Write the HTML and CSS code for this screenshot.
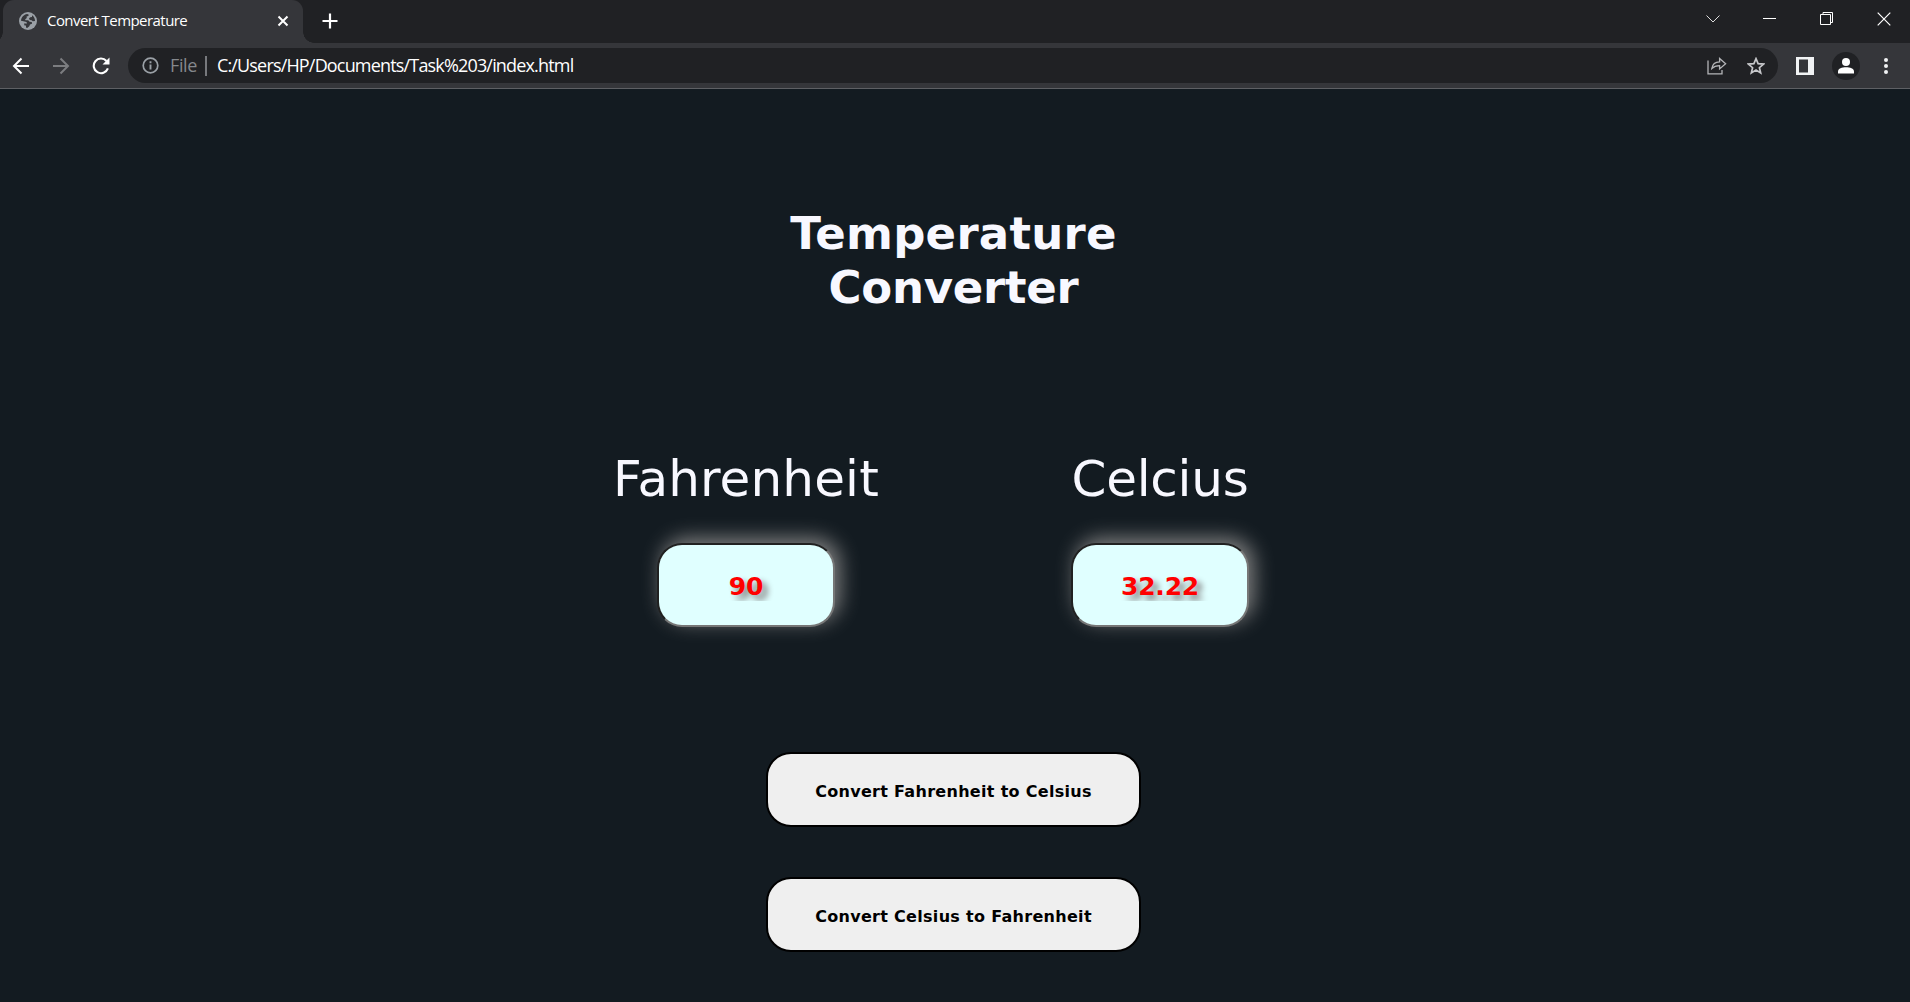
FILE: index.html
```html
<!DOCTYPE html>
<html lang="en">
<head>
<meta charset="utf-8">
<title>Convert Temperature</title>
<link rel="stylesheet" href="styles.css">
</head>
<body>
<header class="browser">
  <div class="tabstrip">
    <div class="tab">
      <svg class="globe" width="18" height="18" viewBox="0 0 18 18"><circle cx="9" cy="9" r="9" fill="#9aa0a6"/><path d="M2 8.700C2.200 5.400 4.800 2.500 8.200 2.100L9.800 2.700 9.300 4 7.600 4.600 7.800 6 6.200 7.200 6.400 8.200H9.200L10.600 9.700 12.800 10 13 11.800 11 12.500 10.300 14.300 8.200 16 7 15.500V13.400H5.500L5 11.500H8L7.500 10 5.500 9.400z M13 3.300C15 4.600 16.100 6.700 16 9L13.800 9.300 12.600 8.200 10.700 7.900 10 6.300 11.300 5.200 13 5z" fill="#35363a"/></svg>
      <span class="tab-title">Convert Temperature</span>
      <svg class="tab-close" width="12" height="12" viewBox="0 0 12 12"><path d="M1.500 1.500l9 9m0-9l-9 9" stroke="#fff" stroke-width="2"/></svg>
    </div>
    <svg class="new-tab" width="16" height="16" viewBox="0 0 16 16"><path d="M8 .5v15M.5 8h15" stroke="#fff" stroke-width="2.200"/></svg>
    <div class="window-controls">
      <svg width="14" height="14" viewBox="0 0 14 14"><path d="M.5 3.500l6.500 6.500 6.500-6.500" fill="none" stroke="#ddd"/></svg>
      <svg width="14" height="14" viewBox="0 0 14 14"><path d="M0 6.500h13" stroke="#fff"/></svg>
      <svg width="14" height="14" viewBox="0 0 14 14"><path d="M.5 2.500h10v10H.5zM3 2V.5h9.500v10H11" fill="none" stroke="#fff"/></svg>
      <svg width="14" height="14" viewBox="0 0 14 14"><path d="M.7.7l12.600 12.600m0-12.600L.7 13.300" stroke="#fff" stroke-width="1.200"/></svg>
    </div>
  </div>
  <div class="toolbar">
    <svg class="nav-icon" width="18" height="18" viewBox="0 0 18 18"><path d="M17 9H2m7.500-7.500L2 9l7.500 7.500" fill="none" stroke="#fff" stroke-width="2"/></svg>
    <svg class="nav-icon" width="18" height="18" viewBox="0 0 18 18"><path d="M1 9h15M8.500 1.500L16 9l-7.500 7.500" fill="none" stroke="#7c7d80" stroke-width="2"/></svg>
    <svg class="nav-icon" width="18" height="18" viewBox="0 0 18 18"><path d="M15.900 11.400A7.300 7.300 0 1 1 14.500 4" fill="none" stroke="#fff" stroke-width="2.100"/><path d="M17.500.5v7h-7z" fill="#fff"/></svg>
    <div class="omnibox">
      <svg width="17" height="17" viewBox="0 0 17 17"><circle cx="8.500" cy="8.500" r="7.300" fill="none" stroke="#9aa0a6" stroke-width="1.700"/><path d="M8.500 4.300v1.900M8.500 7.500v5" stroke="#9aa0a6" stroke-width="1.900"/></svg>
      <span class="scheme">File</span>
      <span class="divider"></span>
      <span class="url">C:/Users/HP/Documents/Task%203/index.html</span>
      <svg class="share" width="20" height="18" viewBox="0 0 20 18"><path d="M1 3.500v13.300h14V13M4.800 11.500C5.500 7 8.500 4.800 12.600 4.800V1.500l6 5.200-6 5.200V8.700C9.500 8.700 6.800 9.500 4.800 11.500z" fill="none" stroke="#b4b5b8" stroke-width="1.300"/></svg>
      <svg class="star" width="18" height="18" viewBox="0 0 18 18"><path d="M9 1.700l2.100 5 5.400.4-4.100 3.600 1.300 5.300L9 13.100 4.300 16l1.300-5.300-4.100-3.600 5.400-.4z" fill="none" stroke="#c6c7ca" stroke-width="1.700"/></svg>
    </div>
    <svg class="panel" width="18" height="18" viewBox="0 0 18 18"><path d="M0 0h18v18H0zM3 2.500v13h9v-13z" fill="#f1f3f4" fill-rule="evenodd"/></svg>
    <svg class="avatar" width="28" height="28" viewBox="0 0 28 28"><circle cx="14" cy="14" r="14" fill="#202124"/><circle cx="14" cy="10" r="4" fill="#fff"/><path d="M6 21.500v-2c0-3 4-4.300 8-4.300s8 1.300 8 4.300v2z" fill="#fff"/></svg>
    <svg class="menu" width="4" height="16" viewBox="0 0 4 16"><g fill="#f1f3f4"><circle cx="2" cy="2" r="2"/><circle cx="2" cy="8" r="2"/><circle cx="2" cy="14" r="2"/></g></svg>
  </div>
</header>
<main class="converter">
  <h1 class="heading"><span class="heading-first">Temperature</span><br><span class="heading-second">Converter</span></h1>
  <div class="fields">
    <div class="field field-f">
      <label class="label label-f" for="fahrenheit">Fahrenheit</label>
      <input class="value" id="fahrenheit" type="text" value="90">
    </div>
    <div class="field">
      <label class="label label-c" for="celcius">Celcius</label>
      <input class="value" id="celcius" type="text" value="32.22">
    </div>
  </div>
  <div class="actions">
    <button class="convert">Convert Fahrenheit to Celsius</button>
    <button class="convert">Convert Celsius to Fahrenheit</button>
  </div>
</main>
</body>
</html>
```
FILE: styles.css
```css
* { box-sizing: border-box; }
body {
  margin: 0;
  height: 1002px;
  overflow: hidden;
  background: #131b21;
  font-family: Verdana, "DejaVu Sans", sans-serif;
}
svg { display: block; flex: none; }

.browser {
  height: 89px;
  background: #35363a;
  border-bottom: 1px solid #5e6064;
  font-family: "Segoe UI", "Open Sans", sans-serif;
  color: #fff;
}
.tabstrip {
  display: flex;
  height: 43px;
  padding-left: 3px;
  background: #202124;
}
.tab {
  position: relative;
  display: flex;
  align-items: center;
  width: 300px;
  height: 43px;
  padding: 0 14px 1px 16px;
  background: #35363a;
  border-radius: 11px 11px 0 0;
}
.tab::before,
.tab::after {
  content: "";
  position: absolute;
  bottom: 0;
  width: 11px;
  height: 11px;
}
.tab::before {
  left: -11px;
  background: radial-gradient(circle at 0 0, #202124 10.5px, #35363a 11px);
}
.tab::after {
  right: -11px;
  background: radial-gradient(circle at 100% 0, #202124 10.5px, #35363a 11px);
}
.tab-title {
  margin-left: 10px;
  padding-bottom: 2px;
  font-size: 15px;
  letter-spacing: -0.55px;
  white-space: nowrap;
}
.tab-close { margin-left: auto; }
.new-tab { margin: 13px 0 0 19px; }
.window-controls {
  display: flex;
  gap: 43px;
  margin: 12px 19px 0 auto;
}

.toolbar {
  display: flex;
  align-items: center;
  height: 45px;
  padding-left: 12px;
}
.nav-icon { margin-right: 22px; }
.omnibox {
  display: flex;
  align-items: center;
  width: 1650px;
  height: 35px;
  margin-left: -4px;
  padding: 0 13px 0 14px;
  border-radius: 18px;
  background: #202124;
  font-size: 18px;
}
.scheme { margin-left: 11px; padding-bottom: 1px; color: #85888c; letter-spacing: -0.4px; }
.divider { width: 2px; height: 20px; margin: 0 10px 0 8px; background: #77797d; }
.url { padding-bottom: 1px; letter-spacing: -0.83px; }
.share { margin-left: auto; }
.star { margin-left: 20px; }
.panel { margin-left: 18px; }
.avatar { margin-left: 18px; }
.menu { margin-left: 24px; }

.converter {
  display: flex;
  flex-direction: column;
  align-items: center;
  width: 1907px;
  padding-top: 118px;
}
.heading {
  margin: 0;
  color: #f8f8ff;
  font-size: 45px;
  line-height: 54px;
  text-align: center;
}
.heading-first { letter-spacing: 0.25px; }
.heading-second { letter-spacing: -0.25px; }
.fields {
  display: flex;
  gap: 192px;
  margin: 134px 45px 0 0;
}
.field {
  display: flex;
  flex-direction: column;
  align-items: center;
  width: 178px;
}
.field-f { width: 266px; }
.label {
  color: #f8f8ff;
  font-size: 50px;
  line-height: 61px;
  white-space: nowrap;
}
.label-f { letter-spacing: 0.15px; }
.label-c { letter-spacing: -0.25px; }
.value {
  width: 178px;
  height: 84px;
  margin-top: 33px;
  padding: 3px 2px 1px;
  border: 2px inset #767676;
  border-radius: 25px;
  background: #e0ffff;
  box-shadow: 5px -5px 20px #808080;
  color: red;
  font: bold 25px Verdana, "DejaVu Sans", sans-serif;
  letter-spacing: -0.2px;
  text-align: center;
  text-shadow: 5px 5px 6px #808080;
}
.actions {
  display: flex;
  flex-direction: column;
  gap: 50px;
  margin-top: 125px;
}
.convert {
  width: 375px;
  height: 75px;
  padding: 4px 6px 0;
  border: 2px solid #000;
  border-radius: 25px;
  background: #efefef;
  color: #000;
  font: bold 16px Verdana, "DejaVu Sans", sans-serif;
  letter-spacing: 0.3px;
}
```
